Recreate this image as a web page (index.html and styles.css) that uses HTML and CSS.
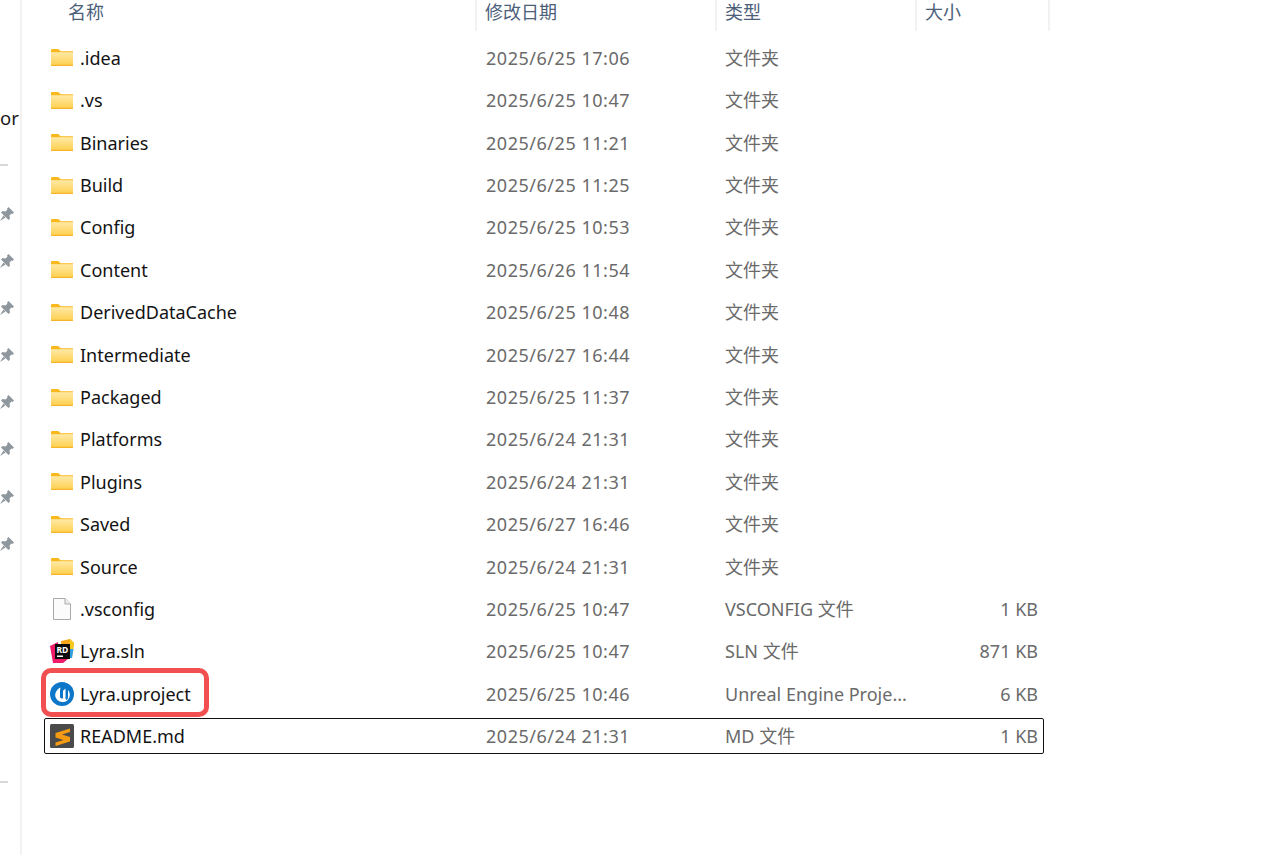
FILE: index.html
```html
<!DOCTYPE html>
<html lang="zh-CN">
<head>
<meta charset="utf-8">
<title>Lyra</title>
<link rel="stylesheet" href="styles.css">
</head>
<body>
<svg class="defs" width="0" height="0" aria-hidden="true">
  <defs>
    <linearGradient id="fold" x1="0" y1="0" x2="0" y2="1"><stop offset="0" stop-color="#ffe9a6"/><stop offset="1" stop-color="#ffd152"/></linearGradient>
    <symbol id="folder" viewBox="0 0 22 17">
      <path d="M0 1.200C0 .5.5 0 1.200 0h5.600c.5 0 .8.2 1.100.5L9.600 2.200H22V17H0z" fill="#fbb81c"/>
      <path d="M0 3.200h22V16H0z" fill="url(#fold)"/>
      <path d="M0 15.800h22V17H0z" fill="#f5b42a"/>
    </symbol>
    <symbol id="pin" viewBox="0 0 14 14">
      <path d="M8.500 0 14 5.500 12.500 7 11.500 6.500 9.500 8.500 10 11.500 8.500 13 1 5.500 2.500 4 5.500 4.500 7.500 2.500 7 1.500z" fill="#8f979e"/>
      <path d="M3.500 8.500 0 14 5.500 10.500z" fill="#8f979e"/>
    </symbol>
  </defs>
</svg>
<div class="app">
  <aside class="side">
    <div class="side-label">or</div>
    <div class="side-rule"></div>
    <ul class="pins">
      <li><svg class="pin"><use href="#pin"/></svg></li>
      <li><svg class="pin"><use href="#pin"/></svg></li>
      <li><svg class="pin"><use href="#pin"/></svg></li>
      <li><svg class="pin"><use href="#pin"/></svg></li>
      <li><svg class="pin"><use href="#pin"/></svg></li>
      <li><svg class="pin"><use href="#pin"/></svg></li>
      <li><svg class="pin"><use href="#pin"/></svg></li>
      <li><svg class="pin"><use href="#pin"/></svg></li>
    </ul>
    <div class="side-rule side-rule-low"></div>
  </aside>
  <main class="main">
    <div class="head">
      <div class="hc hc-name">名称</div>
      <div class="hc hc-date">修改日期</div>
      <div class="hc hc-type">类型</div>
      <div class="hc hc-size">大小</div>
    </div>
    <div class="list">
      <div class="row"><div class="name"><svg class="ic ic-folder"><use href="#folder"/></svg>.idea</div><div class="date">2025/6/25 17:06</div><div class="type">文件夹</div><div class="size"></div></div>
      <div class="row"><div class="name"><svg class="ic ic-folder"><use href="#folder"/></svg>.vs</div><div class="date">2025/6/25 10:47</div><div class="type">文件夹</div><div class="size"></div></div>
      <div class="row"><div class="name"><svg class="ic ic-folder"><use href="#folder"/></svg>Binaries</div><div class="date">2025/6/25 11:21</div><div class="type">文件夹</div><div class="size"></div></div>
      <div class="row"><div class="name"><svg class="ic ic-folder"><use href="#folder"/></svg>Build</div><div class="date">2025/6/25 11:25</div><div class="type">文件夹</div><div class="size"></div></div>
      <div class="row"><div class="name"><svg class="ic ic-folder"><use href="#folder"/></svg>Config</div><div class="date">2025/6/25 10:53</div><div class="type">文件夹</div><div class="size"></div></div>
      <div class="row"><div class="name"><svg class="ic ic-folder"><use href="#folder"/></svg>Content</div><div class="date">2025/6/26 11:54</div><div class="type">文件夹</div><div class="size"></div></div>
      <div class="row"><div class="name"><svg class="ic ic-folder"><use href="#folder"/></svg>DerivedDataCache</div><div class="date">2025/6/25 10:48</div><div class="type">文件夹</div><div class="size"></div></div>
      <div class="row"><div class="name"><svg class="ic ic-folder"><use href="#folder"/></svg>Intermediate</div><div class="date">2025/6/27 16:44</div><div class="type">文件夹</div><div class="size"></div></div>
      <div class="row"><div class="name"><svg class="ic ic-folder"><use href="#folder"/></svg>Packaged</div><div class="date">2025/6/25 11:37</div><div class="type">文件夹</div><div class="size"></div></div>
      <div class="row"><div class="name"><svg class="ic ic-folder"><use href="#folder"/></svg>Platforms</div><div class="date">2025/6/24 21:31</div><div class="type">文件夹</div><div class="size"></div></div>
      <div class="row"><div class="name"><svg class="ic ic-folder"><use href="#folder"/></svg>Plugins</div><div class="date">2025/6/24 21:31</div><div class="type">文件夹</div><div class="size"></div></div>
      <div class="row"><div class="name"><svg class="ic ic-folder"><use href="#folder"/></svg>Saved</div><div class="date">2025/6/27 16:46</div><div class="type">文件夹</div><div class="size"></div></div>
      <div class="row"><div class="name"><svg class="ic ic-folder"><use href="#folder"/></svg>Source</div><div class="date">2025/6/24 21:31</div><div class="type">文件夹</div><div class="size"></div></div>
      <div class="row"><div class="name">
        <svg class="ic" viewBox="0 0 24 24"><path d="M3.500 1.500H15L20.500 7V22.500H3.500z" fill="#fbfbfb" stroke="#a9a9a9"/><path d="M15 1.500V7H20.500" fill="#eee" stroke="#a9a9a9"/></svg>.vsconfig</div><div class="date">2025/6/25 10:47</div><div class="type">VSCONFIG 文件</div><div class="size">1 KB</div></div>
      <div class="row"><div class="name">
        <svg class="ic" viewBox="0 0 24 24"><path d="M11 2 20 0 24 4 22 18H12z" fill="#f9a51a"/><path d="M20 0 24 4 23 12 19 8z" fill="#f7c81b"/><path d="M0 7 8 3V20H18L13 24H3z" fill="#ee1a6a"/><path d="M20 10h3.500L22 19h-2z" fill="#2f9fe0"/><rect x="5" y="5" width="15" height="15" fill="#0c0c0c"/><path d="M7 16.500h6V18H7z" fill="#fff"/><text class="rd" x="6.500" y="13.500">RD</text></svg>Lyra.sln</div><div class="date">2025/6/25 10:47</div><div class="type">SLN 文件</div><div class="size">871 KB</div></div>
      <div class="row"><div class="name">
        <svg class="ic" viewBox="0 0 24 24"><circle cx="12" cy="12" r="12" fill="#0c76c9"/><path d="M10.500 5.500C6.500 7.500 4.500 11.500 5.500 15 6.500 18 9.500 20 13 20 16 20 18.500 18 19.500 15 20.200 12.500 19.800 9.800 18 8V15C18 16.300 17.500 17.200 16.600 18L15.500 17V6.500L13 8.800V16C12 17 10.500 16.500 10 15V8.500Z" fill="#fff"/></svg>Lyra.uproject</div><div class="date">2025/6/25 10:46</div><div class="type">Unreal Engine Proje...</div><div class="size">6 KB</div></div>
      <div class="row row-focus"><div class="name">
        <svg class="ic" viewBox="0 0 24 24"><rect width="24" height="24" rx="1.500" fill="#4a4a4a"/><path d="M20 4.500 5.500 9v4.500l8 2.500-8 2.500V22l14.500-4.500V13L12 10.500 20 8z" fill="#f59a13"/></svg>README.md</div><div class="date">2025/6/24 21:31</div><div class="type">MD 文件</div><div class="size">1 KB</div></div>
      <div class="mark"></div>
    </div>
  </main>
</div>
</body>
</html>
```

FILE: styles.css
```css
* { box-sizing: border-box; }
html, body { margin: 0; padding: 0; height: 100%; background: #fff; overflow: hidden; }
body {
  font-family: "Noto Sans", "Open Sans", "Noto Sans CJK SC", sans-serif;
  font-size: 18px;
  color: #111;
}
.defs { position: absolute; }
.app { display: flex; height: 855px; }

.side {
  width: 22px;
  flex: none;
  border-right: 2px solid #f2f2f2;
  padding-top: 106px;
  overflow: hidden;
}
.side-label { height: 24px; line-height: 24px; font-size: 18.500px; color: #1a1a1a; white-space: nowrap; }
.side-rule { width: 8px; height: 2px; background: #d9d9d9; margin-top: 34px; }
.side-rule-low { margin-top: 197px; }
.pins { list-style: none; margin: 40.500px 0 0; padding: 0; }
.pins li { height: 47.200px; }
.pin { display: block; width: 14px; height: 14px; }

.main { flex: 1; min-width: 0; padding-left: 22px; position: relative; }

.head {
  display: grid;
  grid-template-columns: 433px 240px 200px 133px;
  height: 31px;
  color: #4c607a;
  font-family: "Noto Sans CJK SC", sans-serif;
  font-size: 18px;
  width: 1006px;
}
.hc { line-height: 22px; border-right: 2px solid #f2f2f2; padding-left: 8px; }
.hc-name { padding-left: 24px; }

.list { padding-top: 8.900px; position: relative; }
.row {
  display: grid;
  grid-template-columns: 432px 240px 200px 121px;
  width: 1000px;
  height: 36px;
  margin-bottom: 6.400px;
  border: 1px solid transparent;
  border-radius: 2px;
  align-items: center;
  color: #6a6a6a;
  line-height: 34px;
}
.row-focus { border-color: #111; }
.name { display: flex; align-items: center; color: #131313; padding-left: 5px; white-space: nowrap; }
.ic { width: 24px; height: 24px; flex: none; margin-right: 6px; overflow: visible; }
.ic-folder { width: 22px; height: 17px; margin-left: 1px; margin-right: 7px; }
.date { padding-left: 9px; letter-spacing: .53px; }
.type { padding-left: 8px; font-family: "Noto Sans", "Noto Sans CJK SC", sans-serif; white-space: nowrap; }
.size { text-align: right; }
.rd { font-family: "Noto Sans", sans-serif; font-size: 8.500px; font-weight: 700; fill: #fff; }

.mark {
  position: absolute;
  left: -3px;
  top: 637px;
  width: 168px;
  height: 49px;
  border: 5px solid #f25050;
  border-radius: 10px;
  pointer-events: none;
}
```
